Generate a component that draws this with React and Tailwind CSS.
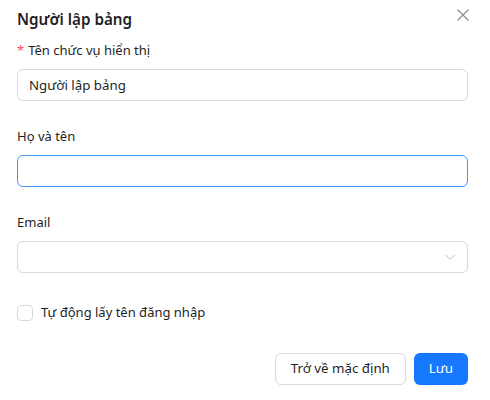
import React, { useState } from 'react';

export default function App() {
  const [name, setName] = useState('Người lập bảng');
  const [fullName, setFullName] = useState('');
  const [auto, setAuto] = useState(false);

  return (
    <div className="w-[490px] h-[400px] bg-white text-[13.3px] text-[#1f1f1f] relative overflow-hidden font-['Noto_Sans',sans-serif]">
      {/* close */}
      <button className="absolute right-[20px] top-[8px] w-[14px] h-[14px] text-[#8c8c8c]">
        <svg viewBox="0 0 14 14" width="14" height="14" fill="none" stroke="currentColor" strokeWidth="1.2">
          <path d="M1.5 1.5 L12.5 12.5 M12.5 1.5 L1.5 12.5" />
        </svg>
      </button>

      <div className="pl-[17px] pr-[22px] pt-[7px]">
        <h1 className="text-[15.2px] leading-[24px] font-semibold mb-[8px]">Người lập bảng</h1>

        <div className="mb-[24px]">
          <label className="block leading-[22px] pb-[8px] text-[13px]">
            <span className="text-[#ff4d4f] mr-[4px]">*</span>Tên chức vụ hiển thị
          </label>
          <input
            value={name}
            onChange={(e) => setName(e.target.value)}
            className="w-full h-[32px] px-[11px] border border-[#d9d9d9] rounded-[6px] outline-none text-[13.3px]"
          />
        </div>

        <div className="mb-[24px]">
          <label className="block leading-[22px] pb-[8px] text-[13px]">Họ và tên</label>
          <input
            value={fullName}
            onChange={(e) => setFullName(e.target.value)}
            className="w-full h-[32px] px-[11px] border border-[#4096ff] rounded-[6px] outline-none text-[13.3px]"
          />
        </div>

        <div className="mb-[29px]">
          <label className="block leading-[22px] pb-[8px] text-[13px]">Email</label>
          <div className="w-full h-[32px] px-[11px] border border-[#d9d9d9] rounded-[6px] flex items-center justify-end">
            <svg viewBox="0 0 12 12" width="12" height="12" fill="none" stroke="#bfbfbf" strokeWidth="1">
              <path d="M1.5 4 L6 8.5 L10.5 4" />
            </svg>
          </div>
        </div>

        <label className="flex items-center gap-[8px] h-[22px] cursor-pointer">
          <input type="checkbox" checked={auto} onChange={() => setAuto(!auto)} className="sr-only" />
          <span className="w-[16px] h-[16px] border border-[#d9d9d9] rounded-[4px] bg-white" />
          <span className="text-[13px]">Tự động lấy tên đăng nhập</span>
        </label>

        <div className="flex justify-end gap-[8px] mt-[29px]">
          <button className="h-[32px] px-[15px] border border-[#d9d9d9] rounded-[6px] bg-white text-[13.3px]">Trở về mặc định</button>
          <button className="h-[32px] px-[15px] rounded-[6px] bg-[#1677ff] text-white text-[13.3px]">Lưu</button>
        </div>
      </div>
    </div>
  );
}
